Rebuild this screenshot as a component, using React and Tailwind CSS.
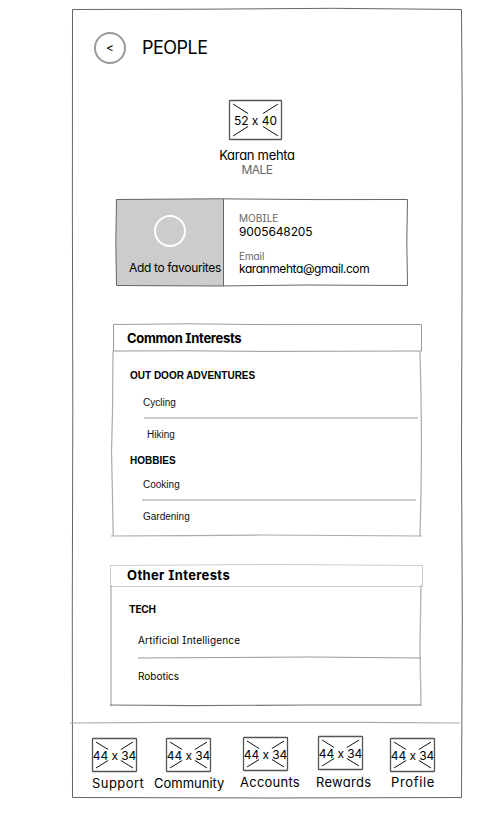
const hand = "font-['Comic_Sans_MS','Inter',sans-serif] [font-feature-settings:'cv08','cv11','calt'_0]";

// Hand-drawn outline laid over its panel; d uses the panel's own pixels.
function Sketch({ d, color = "#666666", width = 1 }) {
  return (
    <svg className="pointer-events-none absolute inset-0 h-full w-full overflow-visible" fill="none" stroke={color} strokeWidth={width}>
      <path d={d} />
    </svg>
  );
}

function Placeholder({ w, h, label, text }) {
  return (
    <div className="relative flex shrink-0 items-center justify-center" style={{ width: w, height: h }}>
      <svg className="absolute inset-0 h-full w-full overflow-visible" fill="none" stroke="#111" strokeWidth="1">
        <rect x="0.5" y="0.5" width={w - 1} height={h - 1} rx="0.5" stroke="#555" strokeWidth="1.3" />
        <path d={`M4 4L${w * 0.36} ${h * 0.34}M${w - 4} 4L${w * 0.64} ${h * 0.34}M4 ${h - 4}L${w * 0.36} ${h * 0.66}M${w - 4} ${h - 4}L${w * 0.64} ${h * 0.66}`} />
      </svg>
      <span className={`relative whitespace-nowrap leading-none ${text}`}>{label}</span>
    </div>
  );
}

function NavItem({ label, item, text }) {
  return (
    <div className={`flex flex-col ${item}`}>
      <Placeholder w={45} h={34} label="44 x 34" text="pt-px text-xs tracking-[-0.1px]" />
      <span className={`whitespace-nowrap text-[13px] leading-4 ${text}`}>{label}</span>
    </div>
  );
}

export default function App() {
  return (
    <div className={`h-[815px] w-[479px] overflow-hidden bg-white pl-[72px] pt-[9px] text-black ${hand}`}>
      <main className="relative flex h-[789px] w-[390px] flex-col">
        <Sketch d="M.5.5L130 .2L260 -.7L389.5 .5L390.2 100L390 280L389.5 440L390.3 610L389.5 788.5L200 789L.5 788.5L.3 600L.8 400L.4 200Z" />

        <header className="ml-[22px] mt-[23px] flex h-8 items-center gap-4">
          <button className="flex h-8 w-8 items-center justify-center rounded-full border-2 border-[#999] text-xs leading-none">&lt;</button>
          <h1 className="text-lg leading-8 tracking-[-0.5px]">PEOPLE</h1>
        </header>

        <section className="ml-[140px] mt-9 flex w-[90px] flex-col items-center">
          <div className="flex w-full justify-center pr-[3px]">
            <Placeholder w={53} h={40} label="52 x 40" text="pt-px text-xs" />
          </div>
          <p className="mt-[7px] whitespace-nowrap text-[13px] leading-4 tracking-[-0.3px]">Karan mehta</p>
          <p className="text-xs leading-[14px] tracking-[-0.5px] text-[#666]">MALE</p>
        </section>

        <section className="relative ml-11 mt-[22px] flex h-[87px] w-[292px]">
          <div className="flex w-[108px] flex-col items-center border-r border-[#666] bg-[#ccc] pt-4">
            <div className="h-8 w-8 rounded-full border-2 border-white" />
            <p className="ml-[13px] mt-[13px] self-start whitespace-nowrap text-xs leading-4 tracking-[-0.34px]">Add to favourites</p>
          </div>
          <div className="ml-[15px] flex flex-col whitespace-nowrap text-xs">
            <span className="mt-[13px] text-[10px] leading-[13px] text-[#666]">MOBILE</span>
            <span className="leading-[14px] tracking-[-0.12px]">9005648205</span>
            <span className="mt-[11px] text-[10px] leading-3 tracking-[-0.1px] text-[#666]">Email</span>
            <span className="leading-[13px] tracking-[-0.43px]">karanmehta@gmail.com</span>
          </div>
          <Sketch d="M.5.5L100 -.2L200 .6L291.5.5L290.8 43L291.5 86.5L190 86L100 87L.5 86.5L-.2 43Z" />
        </section>

        <section className="ml-10 mt-[38px] flex w-[310px] flex-col">
          <div className="relative ml-px flex h-7 items-center">
            <h2 className="ml-[14px] text-[13px] font-bold leading-7 tracking-[-0.3px]">Common Interests</h2>
            <Sketch color="#999" d="M.5.5L75 -.2L150 .6L308.5.5L308.5 27L150 27.4L75 26.8L.5 27Z" />
          </div>
          <div className="relative flex h-[185px] flex-col whitespace-nowrap pt-4 font-['Liberation_Sans',Arial,sans-serif] text-[10px] leading-4 text-[#111]">
            <h3 className="ml-[18px] font-bold text-black">OUT DOOR ADVENTURES</h3>
            <p className="ml-[31px] mt-[11px]">Cycling</p>
            <hr className="ml-8 mt-[6px] w-[274px] border-t-2 border-[#ccc]" />
            <p className="ml-[35px] mt-2">Hiking</p>
            <h3 className="ml-[18px] mt-[10px] font-bold text-black">HOBBIES</h3>
            <p className="ml-[31px] mt-2">Cooking</p>
            <hr className="ml-[30px] mt-[6px] w-[274px] border-t-2 border-[#ccc]" />
            <p className="ml-[31px] mt-2">Gardening</p>
            <Sketch color="#aaa" width={1.2} d="M1 -1L.5 60L-.5 100L.4 140L1.2 184M308 -1L309 45L309.5 90L309 140L308 184M-1 184L75 183.6L150 183L310 184" />
          </div>
        </section>

        <section className="ml-[38px] mt-[27px] flex w-[313px] flex-col">
          <div className="relative flex h-[22px] items-center">
            <h2 className="ml-[17px] text-[13px] font-bold leading-5 tracking-[0.36px]">Other Interests</h2>
            <Sketch color="#ccc" d="M.5 1.5L80 1L160 .4L312.5 1.5V22.5H.5Z" />
          </div>
          <div className="relative flex h-[120px] flex-col whitespace-nowrap pt-[15px] text-[10px] leading-4">
            <h3 className="ml-[19px] font-bold tracking-[-0.2px]">TECH</h3>
            <p className="ml-7 mt-[15px] tracking-[0.18px]">Artificial Intelligence</p>
            <p className="ml-7 mt-5">Robotics</p>
            <Sketch color="#bbb" width={1.5} d="M1 -1V120M311 -1L310 61L311 120" />
            <Sketch color="#999" d="M28 72L100 71.6L200 71L311 72" />
            <Sketch color="#777" width={1.2} d="M0 119L80 119.6L200 119L311 119" />
          </div>
        </section>

        <nav className="relative -ml-[2px] mt-[15px] h-[76px] w-[392px]">
          <Sketch color="#aaa" width={1.2} d="M0 2L100 1.4L290 1.4L390 2" />
          <div className="flex h-full items-start">
            <NavItem label="Support" item="ml-[22px] mt-[17px] w-[45px]" text="mt-[3px] tracking-[0.45px]" />
            <NavItem label="Community" item="ml-[29px] mt-[17px] w-[45px]" text="mt-[3px] -ml-[12px]" />
            <NavItem label="Accounts" item="ml-8 mt-4 w-[45px]" text="mt-[3px] -ml-[3px] tracking-[0.25px]" />
            <NavItem label="Rewards" item="ml-[30px] mt-[15px] w-[45px]" text="mt-1 -ml-[2px] tracking-[0.3px]" />
            <NavItem label="Profile" item="ml-[27px] mt-[17px] w-[45px]" text="mt-[2px] ml-px tracking-[0.65px]" />
          </div>
        </nav>
      </main>
    </div>
  );
}
